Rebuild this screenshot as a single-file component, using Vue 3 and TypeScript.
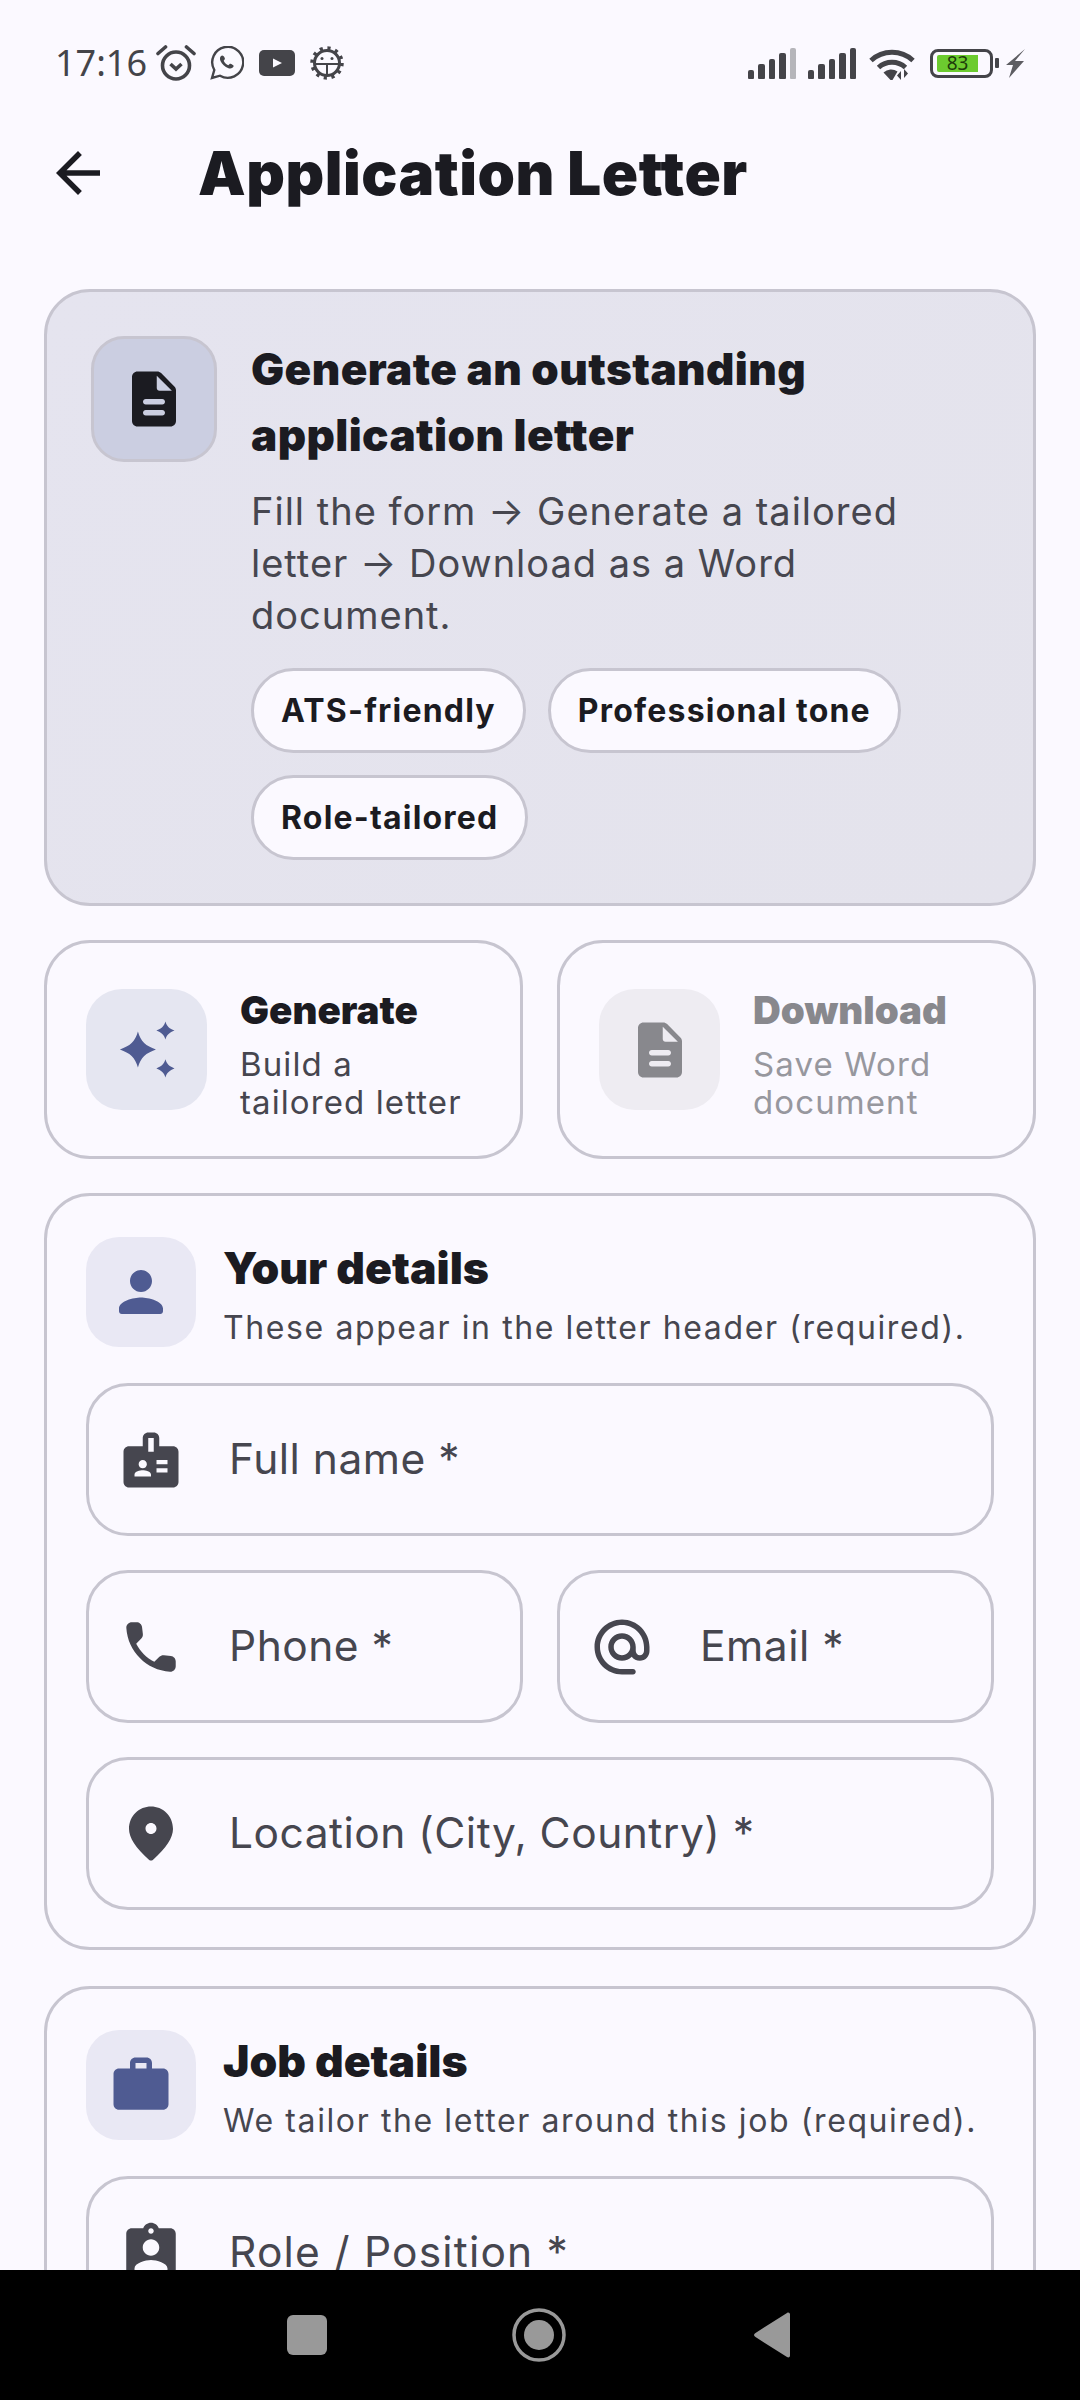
<script setup lang="ts">
const icons = {
  doc: 'M14.59 2.59c-.38-.38-.89-.59-1.42-.59H6c-1.1 0-2 .9-2 2v16c0 1.1.89 2 1.99 2H18c1.1 0 2-.9 2-2V8.83c0-.53-.21-1.04-.59-1.41l-4.82-4.83zM15 18H9c-.55 0-1-.45-1-1s.45-1 1-1h6c.55 0 1 .45 1 1s-.45 1-1 1zm0-4H9c-.55 0-1-.45-1-1s.45-1 1-1h6c.55 0 1 .45 1 1s-.45 1-1 1zm-2-6V3.5L18.5 9H14c-.55 0-1-.45-1-1z',
  spark: 'M8.7 5.25C9.7 8.9 11.6 10.5 15.25 11.8 11.6 13.1 9.7 14.7 8.7 18.35 7.7 14.7 5.8 13.1 2.15 11.8 5.8 10.5 7.7 8.9 8.7 5.25zM18.7 1.6C19.2 3.4 20.2 4.2 22 4.9 20.2 5.6 19.2 6.4 18.7 8.2 18.2 6.4 17.2 5.6 15.4 4.9 17.2 4.2 18.2 3.4 18.7 1.6zM18.7 15.4C19.2 17.2 20.2 18 22 18.7 20.2 19.4 19.2 20.2 18.7 22 18.2 20.2 17.2 19.4 15.4 18.7 17.2 18 18.2 17.2 18.7 15.4z',
  person: 'M12 12c2.21 0 4-1.79 4-4s-1.79-4-4-4-4 1.79-4 4 1.79 4 4 4zm0 2c-2.67 0-8 1.34-8 4v1c0 .55.45 1 1 1h14c.55 0 1-.45 1-1v-1c0-2.66-5.33-4-8-4z',
  work: 'M20 6h-4V4c0-1.11-.89-2-2-2h-4c-1.11 0-2 .89-2 2v2H4c-1.11 0-1.99.89-1.99 2L2 19c0 1.11.89 2 2 2h16c1.11 0 2-.89 2-2V8c0-1.11-.89-2-2-2zm-6 0h-4V4h4v2z',
  badge: 'M20 7h-5V4c0-1.1-.9-2-2-2h-2c-1.1 0-2 .9-2 2v3H4c-1.1 0-2 .9-2 2v11c0 1.1.9 2 2 2h16c1.1 0 2-.9 2-2V9c0-1.1-.9-2-2-2zM9 12c.83 0 1.5.67 1.5 1.5S9.83 15 9 15s-1.5-.67-1.5-1.5S8.17 12 9 12zm3 6H6v-.75c0-1 2-1.5 3-1.5s3 .5 3 1.5V18zm1-9h-2V4h2v5zm5 7.5h-4V15h4v1.5zm0-3h-4V12h4v1.5z',
  phone: 'M19.23 15.26l-2.54-.29c-.61-.07-1.21.14-1.64.57l-1.84 1.84c-2.83-1.44-5.15-3.75-6.59-6.59l1.85-1.85c.43-.43.64-1.03.57-1.64l-.29-2.52c-.12-1.01-.97-1.77-1.99-1.77H5.03c-1.13 0-2.07.94-2 2.07.53 8.54 7.36 15.36 15.89 15.89 1.13.07 2.07-.87 2.07-2v-1.73c.01-1.01-.75-1.86-1.76-1.98z',
  email: 'M12 2C6.48 2 2 6.48 2 12s4.48 10 10 10h4c.55 0 1-.45 1-1s-.45-1-1-1h-4c-4.34 0-8-3.66-8-8s3.66-8 8-8 8 3.66 8 8v1.43c0 .79-.71 1.57-1.5 1.57s-1.5-.78-1.5-1.57V12c0-2.76-2.24-5-5-5s-5 2.24-5 5 2.24 5 5 5c1.38 0 2.64-.56 3.54-1.47.65.89 1.77 1.47 2.96 1.47 1.97 0 3.5-1.6 3.5-3.57V12c0-5.52-4.48-10-10-10zm0 13c-1.66 0-3-1.34-3-3s1.34-3 3-3 3 1.34 3 3-1.34 3-3 3z',
  place: 'M12 2c-4.2 0-8 3.22-8 8.2 0 3.18 2.45 6.92 7.34 11.23.38.33.95.33 1.33 0C17.55 17.12 20 13.38 20 10.2 20 5.22 16.2 2 12 2zm0 10c-1.1 0-2-.9-2-2s.9-2 2-2 2 .9 2 2-.9 2-2 2z',
  role: 'M19 3h-4.18C14.4 1.84 13.3 1 12 1c-1.3 0-2.4.84-2.82 2H5c-1.1 0-2 .9-2 2v14c0 1.1.9 2 2 2h14c1.1 0 2-.9 2-2V5c0-1.1-.9-2-2-2zm-7 0c.55 0 1 .45 1 1s-.45 1-1 1-1-.45-1-1 .45-1 1-1zm0 4c1.66 0 3 1.34 3 3s-1.34 3-3 3-3-1.34-3-3 1.34-3 3-3zm6 12H6v-1.4c0-2 4-3.1 6-3.1s6 1.1 6 3.1V19z'
}
const chips = ['ATS-friendly', 'Professional tone', 'Role-tailored']
const signalBars = [0, 1, 2, 3, 4]
</script>

<template>
  <div class="screen">
    <div class="content">
      <div class="status">
        <div class="status-left">
          <span class="time">17:16</span>
          <svg class="st-alarm" viewBox="0 0 40 36" width="40" height="36"><circle cx="20" cy="20.5" r="13.5" fill="none" stroke="#444449" stroke-width="3.6"/><path d="M14.5 19l5.5 5 5.5-5" fill="none" stroke="#444449" stroke-width="3.6"/><path d="M2 8.5L9.5 2M38 8.5L30.5 2" stroke="#444449" stroke-width="3.6" stroke-linecap="round"/></svg>
          <svg class="st-wa" viewBox="0 0 34 34" width="34" height="34"><path d="M2 32l2.3-8A15.5 15.5 0 1 1 10 29.7z" fill="none" stroke="#444449" stroke-width="2.4"/><path d="M12 9.5c-2 .7-2.6 3-1.5 5.5 1.4 3 4.3 6 8 7.2 2.6.7 4.7-.3 5.2-2.2.2-.8-3-2.6-3.8-2.3l-1.6 1.5c-2-.7-3.7-2.5-4.6-4.4l1.2-1.7c.3-.7-1.1-3.9-2.9-3.6z" fill="#444449"/></svg>
          <svg class="st-yt" viewBox="0 0 36 26" width="36" height="26"><rect width="36" height="26" rx="5" fill="#444449"/><path d="M14 8.5l9 4.5-9 4.5z" fill="#fbf9ff"/></svg>
          <svg class="st-gear" viewBox="0 0 34 34" width="34" height="34"><circle cx="17" cy="17" r="12.5" fill="none" stroke="#444449" stroke-width="3"/><circle cx="17" cy="17" r="15" fill="none" stroke="#444449" stroke-width="3.5" stroke-dasharray="3.2 4.65"/><path d="M5 18h24M17 18v11" stroke="#444449" stroke-width="2"/><circle cx="12" cy="12.5" r="1.5" fill="#444449"/><circle cx="22" cy="12.5" r="1.5" fill="#444449"/></svg>
        </div>
        <div class="status-right">
          <div class="signal">
            <span v-for="b in signalBars" :key="b" class="bar" :class="{ dim: b === 4 }" :style="{ height: 9 + b * 5.5 + 'px' }"></span>
          </div>
          <div class="signal second">
            <span v-for="b in signalBars" :key="'s' + b" class="bar" :style="{ height: 9 + b * 5.5 + 'px' }"></span>
          </div>
          <svg class="st-wifi" viewBox="0 0 46 33" width="46" height="33"><path d="M2 13.5a31 31 0 0 1 42 0M9.5 20.5a20 20 0 0 1 27 0" fill="none" stroke="#444449" stroke-width="5"/><path d="M14.5 25.5a11 11 0 0 1 14-1l-5 8.5h-2z" fill="#444449"/><path d="M32 33v-9l-4 4.5zM35 22v9l4-4.5z" fill="#444449"/></svg>
          <div class="battery">
            <div class="batt-body"><span class="batt-fill">83</span></div>
            <span class="batt-nub"></span>
          </div>
          <svg class="st-bolt" viewBox="0 0 19 29" width="19" height="29"><path d="M19 0L9 12h9L3 29l4-13H0z" fill="#5d5d62"/></svg>
        </div>
      </div>

      <header class="appbar">
        <svg class="back" viewBox="0 0 24 24" width="66" height="66"><path d="M20 11H7.83l5.59-5.59L12 4l-8 8 8 8 1.41-1.41L7.83 13H20v-2z"/></svg>
        <h1>Application Letter</h1>
      </header>

      <main class="list">
        <section class="hero">
          <div class="hero-icon">
            <svg viewBox="0 0 24 24" width="66" height="66"><path :d="icons.doc"/></svg>
          </div>
          <div class="hero-text">
            <h2>Generate an outstanding<br>application letter</h2>
            <p>Fill the form → Generate a tailored<br>letter → Download as a Word<br>document.</p>
            <div class="chips">
              <span v-for="c in chips" :key="c" class="chip">{{ c }}</span>
            </div>
          </div>
        </section>

        <div class="steps">
          <div class="step">
            <div class="step-icon">
              <svg class="primary" viewBox="0 0 24 24" width="66" height="66"><path :d="icons.spark"/></svg>
            </div>
            <div class="step-text">
              <div class="step-title">Generate</div>
              <div class="step-sub">Build a<br>tailored letter</div>
            </div>
          </div>
          <div class="step disabled">
            <div class="step-icon">
              <svg viewBox="0 0 24 24" width="66" height="66"><path :d="icons.doc"/></svg>
            </div>
            <div class="step-text">
              <div class="step-title">Download</div>
              <div class="step-sub">Save Word<br>document</div>
            </div>
          </div>
        </div>

        <section class="card">
          <div class="card-head">
            <div class="head-icon">
              <svg class="primary" viewBox="0 0 24 24" width="66" height="66"><path :d="icons.person"/></svg>
            </div>
            <div class="head-text">
              <div class="card-title">Your details</div>
              <div class="card-sub">These appear in the letter header (required).</div>
            </div>
          </div>
          <div class="field">
            <svg viewBox="0 0 24 24" width="66" height="66"><path :d="icons.badge"/></svg>
            <span>Full name *</span>
          </div>
          <div class="field-row">
            <div class="field">
              <svg viewBox="0 0 24 24" width="66" height="66"><path :d="icons.phone"/></svg>
              <span>Phone *</span>
            </div>
            <div class="field">
              <svg viewBox="0 0 24 24" width="66" height="66"><path :d="icons.email"/></svg>
              <span>Email *</span>
            </div>
          </div>
          <div class="field">
            <svg viewBox="0 0 24 24" width="66" height="66"><path :d="icons.place"/></svg>
            <span>Location (City, Country) *</span>
          </div>
        </section>

        <section class="card">
          <div class="card-head">
            <div class="head-icon">
              <svg class="primary" viewBox="0 0 24 24" width="66" height="66"><path :d="icons.work"/></svg>
            </div>
            <div class="head-text">
              <div class="card-title">Job details</div>
              <div class="card-sub">We tailor the letter around this job (required).</div>
            </div>
          </div>
          <div class="field wide">
            <svg viewBox="0 0 24 24" width="66" height="66"><path :d="icons.role"/></svg>
            <span>Role / Position *</span>
          </div>
        </section>
      </main>
    </div>

    <nav class="navbar">
      <span class="nav-square"></span>
      <svg class="nav-home" viewBox="0 0 54 54" width="54" height="54"><circle cx="27" cy="27" r="25" fill="none" stroke="#999" stroke-width="3.5"/><circle cx="27" cy="27" r="15" fill="#999"/></svg>
      <svg viewBox="0 0 36 46" width="36" height="46"><path d="M33 1c1.5-1 3-.2 3 1.5v41c0 1.7-1.5 2.5-3 1.5L1.5 25c-2-1.2-2-2.8 0-4z" fill="#999"/></svg>
    </nav>
  </div>
</template>

<style>
html, body {
  margin: 0;
  background: #fbf9ff;
}
</style>

<style scoped>
.screen {
  width: 1080px;
  height: 2400px;
  display: flex;
  flex-direction: column;
  overflow: hidden;
  background: #fbf9ff;
  font-family: 'Inter', 'Liberation Sans', sans-serif;
  color: #1b1b21;
}

.content {
  flex: 1;
  min-height: 0;
  overflow: hidden;
}

.status {
  height: 126px;
  box-sizing: border-box;
  padding: 45px 55px 0 55px;
  display: flex;
  justify-content: space-between;
  align-items: flex-start;
  color: #444449;
}

.status-left,
.status-right {
  display: flex;
  align-items: center;
  height: 36px;
}

.time {
  font-family: 'Noto Sans', sans-serif;
  font-size: 36px;
  line-height: 36px;
  width: 101px;
}

.st-wa { margin-left: 14px; }
.st-yt { margin-left: 15px; }
.st-gear { margin-left: 15px; }

.signal {
  display: flex;
  align-items: flex-end;
  gap: 4px;
  width: 48px;
  height: 31px;
}

.signal.second { margin-left: 12px; }

.bar {
  width: 6.4px;
  background: #444449;
  border-radius: 2px 2px 1px 1px;
}

.bar.dim { background: #b5b5ba; }

.st-wifi { margin-left: 13px; }

.battery {
  display: flex;
  align-items: center;
  margin-left: 15px;
}

.batt-body {
  width: 63px;
  height: 29px;
  box-sizing: border-box;
  border: 3px solid #444449;
  border-radius: 8px;
  padding: 3px 4px;
}

.batt-fill {
  display: block;
  width: 41px;
  height: 17px;
  background: #6ccb2f;
  border-radius: 2px 0 0 2px;
  font-family: 'Noto Sans', sans-serif;
  font-size: 19px;
  line-height: 17px;
  text-align: center;
  color: #1d3d0a;
}

.batt-nub {
  width: 4px;
  height: 10px;
  margin-left: 2px;
  background: #444449;
  border-radius: 1px;
}

.st-bolt { margin-left: 7px; }

.appbar {
  display: flex;
  align-items: center;
  height: 94px;
  padding-left: 45px;
}

.back {
  fill: #1b1b21;
  flex: none;
}

.appbar h1 {
  margin: 0 0 0 87px;
  font-size: 60px;
  font-weight: 900;
  line-height: 94px;
  letter-spacing: 0.5px;
}

.list {
  padding: 69px 44px 0;
  display: flex;
  flex-direction: column;
}

.hero {
  box-sizing: border-box;
  padding: 44px 44px 43px;
  display: flex;
  gap: 34px;
  border: 3px solid #c7c5d0;
  border-radius: 46px;
  background: linear-gradient(135deg, #e5e4ef, #e4e3ec);
}

.hero-icon {
  flex: none;
  width: 126px;
  height: 126px;
  box-sizing: border-box;
  display: flex;
  align-items: center;
  justify-content: center;
  border: 3px solid #c7c5d0;
  border-radius: 33px;
  background: #cbcee1;
  fill: #1b1b21;
}

.hero-text {
  min-width: 0;
}

.hero h2 {
  margin: 0;
  font-size: 44px;
  font-weight: 900;
  line-height: 66px;
  letter-spacing: 0.4px;
}

.hero p {
  margin: 17px 0 0;
  font-size: 38px;
  line-height: 52px;
  letter-spacing: 1px;
  color: #46464f;
}

.chips {
  display: flex;
  flex-wrap: wrap;
  gap: 22px;
  margin-top: 27px;
}

.chip {
  box-sizing: border-box;
  height: 85px;
  padding: 0 27px;
  display: flex;
  align-items: center;
  border: 3px solid #c7c5d0;
  border-radius: 43px;
  background: #fbf9ff;
  font-size: 32px;
  font-weight: 700;
  letter-spacing: 1.2px;
}

.steps {
  display: flex;
  gap: 34px;
  margin-top: 34px;
}

.step {
  flex: 1;
  box-sizing: border-box;
  height: 219px;
  padding: 0 20px 0 39px;
  display: flex;
  align-items: center;
  gap: 33px;
  border: 3px solid #c7c5d0;
  border-radius: 46px;
}

.step-icon {
  flex: none;
  width: 121px;
  height: 121px;
  display: flex;
  align-items: center;
  justify-content: center;
  border-radius: 36px;
  background: #e5e6f1;
}

.step-text {
  padding-top: 8px;
}

.step-title {
  font-size: 38.5px;
  font-weight: 900;
  line-height: 48px;
}

.step-sub {
  margin-top: 11px;
  font-size: 33px;
  line-height: 38.5px;
  letter-spacing: 1.1px;
  color: #46464f;
}

.step.disabled .step-icon { background: #eeecf2; }
.step.disabled svg { fill: #88888d; }
.step.disabled .step-title { color: #88888d; }
.step.disabled .step-sub { color: #97979e; }

.primary { fill: #4f5b92; }

.card {
  box-sizing: border-box;
  margin-top: 34px;
  padding: 41px 39px 37px;
  display: flex;
  flex-direction: column;
  border: 3px solid #c7c5d0;
  border-radius: 46px;
}

.card + .card { margin-top: 36px; }

.card-head {
  display: flex;
  gap: 27px;
  height: 110px;
  margin-bottom: 36px;
}

.head-icon {
  flex: none;
  width: 110px;
  height: 110px;
  display: flex;
  align-items: center;
  justify-content: center;
  border-radius: 33px;
  background: #e9e8f4;
}

.head-text {
  padding-top: 2px;
}

.card-title {
  font-size: 44.5px;
  font-weight: 900;
  line-height: 58px;
}

.card-sub {
  margin-top: 9px;
  font-size: 32px;
  line-height: 44px;
  letter-spacing: 1.6px;
  color: #46464f;
  white-space: nowrap;
}

.field {
  box-sizing: border-box;
  height: 153px;
  padding-left: 29px;
  display: flex;
  align-items: center;
  gap: 45px;
  border: 3px solid #c7c5d0;
  border-radius: 42px;
  fill: #46464f;
  color: #46464f;
  font-size: 42.5px;
  letter-spacing: 0.5px;
}

.field span {
  margin-top: -2px;
}

.field.wide {
  letter-spacing: 1.2px;
}

.field-row {
  display: flex;
  gap: 34px;
  margin: 34px 0;
}

.field-row .field { flex: 1; }

.navbar {
  flex: none;
  height: 130px;
  padding: 0 290px 0 287px;
  display: flex;
  align-items: center;
  justify-content: space-between;
  background: #000;
}

.nav-square {
  width: 40px;
  height: 40px;
  border-radius: 6px;
  background: #999;
}

.nav-home {
  margin-right: 3px;
}
</style>
